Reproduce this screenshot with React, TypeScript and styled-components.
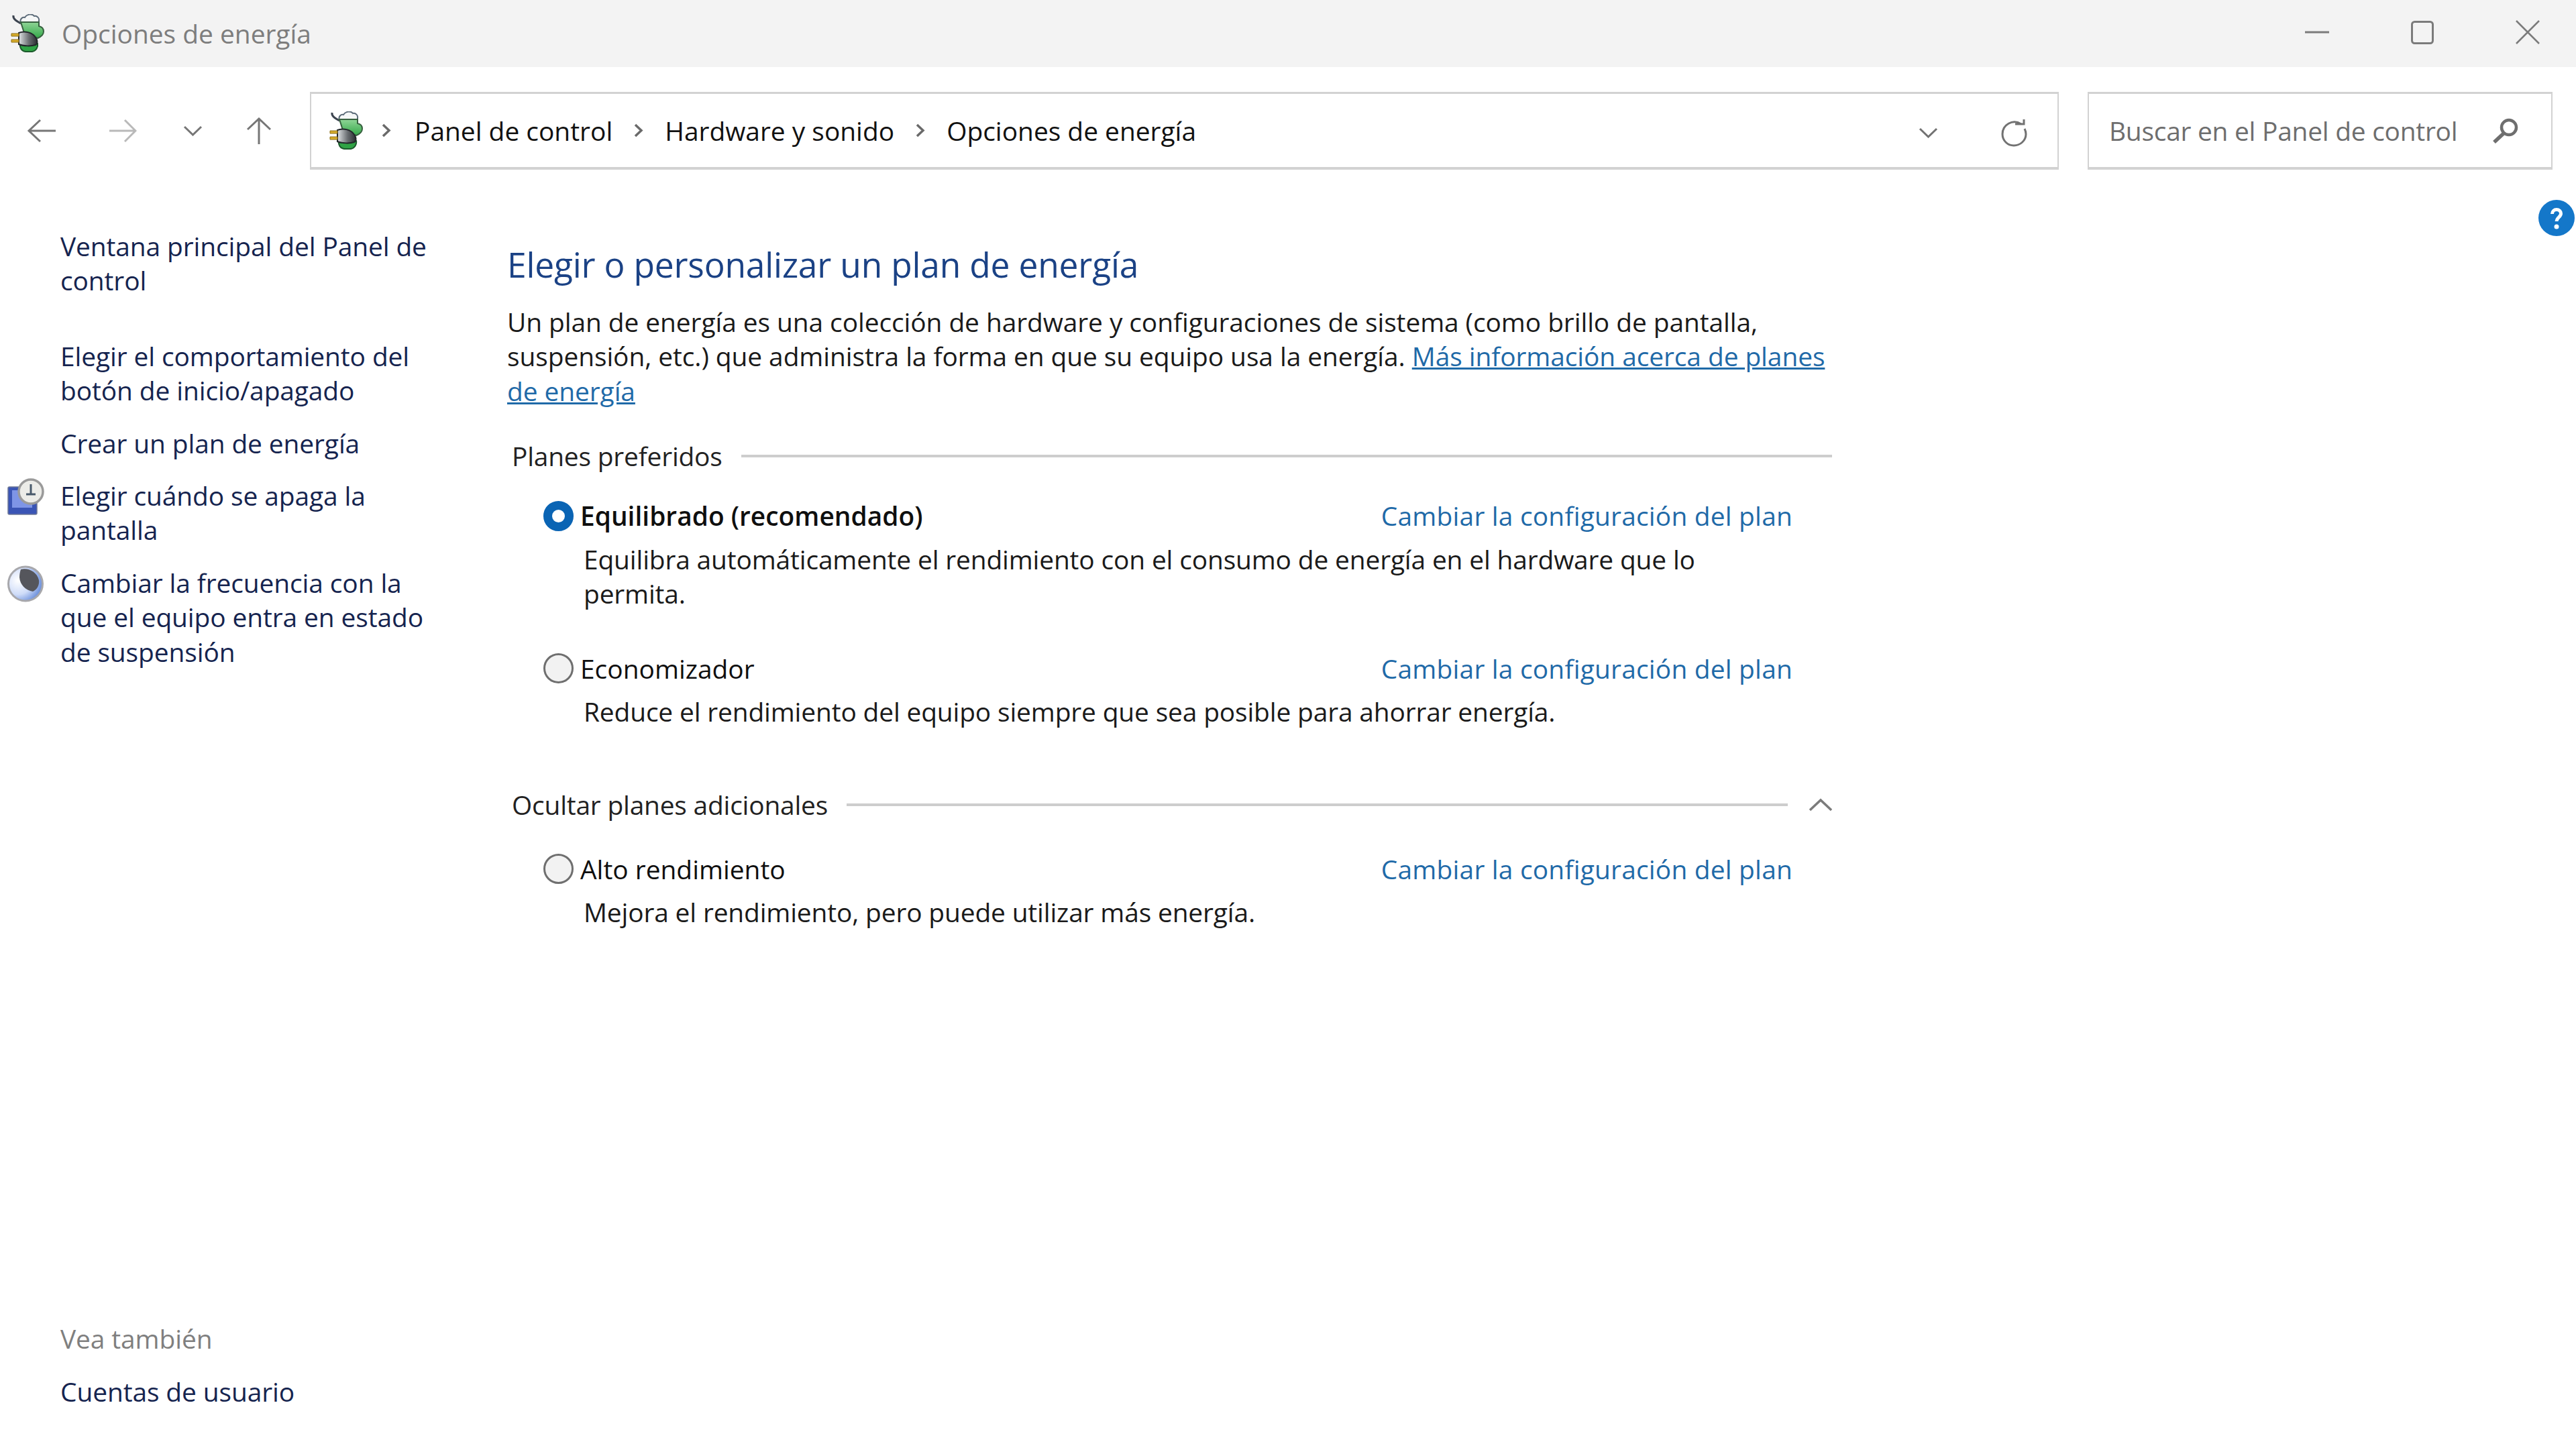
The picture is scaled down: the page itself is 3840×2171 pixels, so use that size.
import type { ReactNode } from 'react';
import { createGlobalStyle, styled } from 'styled-components';

const GlobalStyle = createGlobalStyle`
  html, body {
    margin: 0;
    padding: 0;
    background: #ffffff;
  }
  * {
    box-sizing: border-box;
  }
`;

const Page = styled.div`
  width: 3840px;
  height: 2171px;
  display: flex;
  flex-direction: column;
  overflow: hidden;
  background: #ffffff;
  font-family: "Open Sans", "Noto Sans", sans-serif;
  font-size: 38.9px;
  line-height: 51.4px;
  color: #1a1a1a;
`;

const TitleBar = styled.header`
  height: 100px;
  flex: none;
  display: flex;
  align-items: center;
  padding-left: 16px;
  background: #f3f3f3;
`;

const TitleText = styled.span`
  margin-left: 22px;
  color: #7d7d7d;
`;

const WindowButtons = styled.div`
  margin-left: auto;
  margin-right: 54px;
  margin-bottom: 4px;
  display: flex;
  align-items: center;
  gap: 122px;
  color: #7b7b7b;
`;

const NavBar = styled.nav`
  height: 153px;
  flex: none;
  display: flex;
  align-items: flex-end;
  padding-right: 35px;
`;

const NavButtons = styled.div`
  width: 462px;
  height: 116px;
  flex: none;
  display: flex;
  align-items: center;
  padding-left: 40px;
  color: #767676;
`;

const NavSlot = styled.span<{ $width: number }>`
  width: ${(p) => p.$width}px;
  flex: none;
  display: flex;
  align-items: center;
`;

const FieldBox = styled.div`
  height: 116px;
  display: flex;
  align-items: center;
  background: #ffffff;
  border: 2px solid #d2d2d2;
  border-top-width: 3px;
  border-bottom-width: 4px;
`;

const AddressBox = styled(FieldBox)`
  width: 2607px;
  flex: none;
  padding-left: 27px;
`;

const Crumb = styled.span`
  color: #111111;
`;

const CrumbArrow = styled.span`
  width: 78px;
  display: flex;
  justify-content: center;
  color: #6a6a6a;
`;

const FirstArrow = styled(CrumbArrow)`
  width: 73px;
  padding-right: 11px;
`;

const AddressTools = styled.div`
  margin-left: auto;
  margin-right: 44px;
  padding-top: 6px;
  display: flex;
  align-items: center;
  gap: 93px;
  color: #727272;
`;

const SearchBox = styled(FieldBox)`
  width: 693px;
  flex: none;
  margin-left: 43px;
  padding: 0 48px 0 30px;
  justify-content: space-between;
  letter-spacing: -0.25px;
  color: #6e6e6e;
`;

const Body = styled.div`
  flex: 1;
  min-height: 0;
  display: flex;
`;

const Sidebar = styled.aside`
  width: 756px;
  flex: none;
  display: flex;
  flex-direction: column;
  padding: 88px 0 71px;
  letter-spacing: -0.1px;
`;

const SideLink = styled.a<{ $gap?: number }>`
  display: flex;
  align-items: flex-start;
  min-height: 51px;
  margin-bottom: ${(p) => p.$gap ?? 27}px;
  color: #15244f;
`;

const SideIcon = styled.span`
  width: 90px;
  flex: none;
  padding-left: 11px;
  display: flex;
`;

const SideHeading = styled.div`
  margin-top: auto;
  margin-bottom: 27px;
  padding-left: 90px;
  color: #7f7f7f;
`;

const Main = styled.main`
  width: 1975px;
  flex: none;
  padding-top: 113px;
`;

const Heading = styled.h1`
  margin: 0;
  font-size: 51.5px;
  font-weight: 400;
  line-height: 56px;
  letter-spacing: -0.2px;
  color: #1b4285;
`;

const Intro = styled.p`
  margin: 32px 0 0;
  white-space: nowrap;
  letter-spacing: -0.08px;
`;

const InlineLink = styled.a`
  color: #1f6aa8;
  text-decoration: underline;
`;

const SectionHead = styled.div<{ $top: number }>`
  display: flex;
  align-items: center;
  margin-top: ${(p) => p.$top}px;
  padding-left: 7px;
  letter-spacing: -0.2px;
  color: #222222;
`;

const SectionRule = styled.span`
  flex: 1;
  height: 4px;
  margin-left: 28px;
  background: #cdcdcd;
`;

const Collapse = styled.span`
  width: 66px;
  flex: none;
  padding-left: 32px;
  display: flex;
  color: #7b7b7b;
`;

const PlanList = styled.div<{ $top: number }>`
  margin-top: ${(p) => p.$top}px;
  padding-left: 54px;
  display: flex;
  flex-direction: column;
  gap: 61px;
`;

const PlanHead = styled.div`
  display: flex;
  align-items: center;
  height: 51px;
`;

const PlanLabel = styled.span<{ $selected?: boolean }>`
  margin-left: 10px;
  font-weight: ${(p) => (p.$selected ? 600 : 400)};
  color: #0f0f0f;
`;

const Radio = styled.span<{ $selected?: boolean }>`
  width: 45px;
  height: 45px;
  flex: none;
  border-radius: 50%;
  background: ${(p) => (p.$selected ? '#ffffff' : '#f2f2f2')};
  border: ${(p) => (p.$selected ? '13px solid #0a64b4' : '3px solid #6f6f6f')};
`;

const PlanLink = styled.a`
  margin-left: auto;
  margin-right: 59px;
  letter-spacing: 0.2px;
  color: #1f6aa8;
`;

const PlanText = styled.div`
  margin-top: 13px;
  padding-left: 60px;
  letter-spacing: -0.15px;
`;

const HelpSlot = styled.div`
  flex: 1;
  display: flex;
  justify-content: flex-end;
  padding: 45px 2px 0 0;
`;

const PowerIcon = () => (
  <svg width="54" height="58" viewBox="0 0 54 58">
    <defs>
      <linearGradient id="powerCell" x1="0" y1="0" x2="0" y2="1">
        <stop offset="0%" stopColor="#8fd596" />
        <stop offset="100%" stopColor="#33a848" />
      </linearGradient>
      <linearGradient id="powerPlug" x1="0" y1="0" x2="1" y2="0">
        <stop offset="0%" stopColor="#dfe2e4" />
        <stop offset="55%" stopColor="#6a6e72" />
        <stop offset="100%" stopColor="#2a2d31" />
      </linearGradient>
    </defs>
    <path d="M4 2c-1 5 4 8 11 12" fill="none" stroke="#3c4450" strokeWidth="3" />
    <path d="M15 13c-2-5 2-9 6-8 3-5 11-6 14-2 4-1 8 3 7 7v4H15z" fill="#f5f7f7" stroke="#5b6a78" strokeWidth="2" />
    <path d="M15 12h27v6c5 1 7 4 7 8 0 5-4 8-9 10l-20-8z" fill="url(#powerCell)" stroke="#37603f" strokeWidth="2" />
    <path d="M14 44h26c1 5-2 11-8 12H22c-6-1-9-6-8-12z" fill="#2fa345" stroke="#1c5a2c" strokeWidth="2" />
    <path d="M12 28c8-3 20-2 26 8 2 4 2 8-1 10-6 2-18 2-25-1z" fill="url(#powerPlug)" stroke="#22262a" strokeWidth="2" />
    <path d="M1 29h11v4H1zM1 38h11v4H1z" fill="#d8ad2b" stroke="#8c6f14" strokeWidth="1" />
  </svg>
);

const ClockIcon = () => (
  <svg width="55" height="55" viewBox="0 0 55 55">
    <rect x="1" y="13" width="43" height="41" rx="2" fill="#3a55b5" stroke="#6d7796" strokeWidth="1.5" />
    <path d="M7 18h30v26H7z" fill="#7e95e6" />
    <circle cx="35" cy="20" r="18" fill="#ecece8" stroke="#9a9a9a" strokeWidth="3.5" />
    <path d="M35 9v15M28 24h14" fill="none" stroke="#48596a" strokeWidth="3" />
  </svg>
);

const MoonIcon = () => (
  <svg width="54" height="55" viewBox="0 0 54 55">
    <defs>
      <radialGradient id="moonGlow" cx="28%" cy="40%" r="75%">
        <stop offset="0%" stopColor="#ffffff" />
        <stop offset="55%" stopColor="#cfdcf8" />
        <stop offset="100%" stopColor="#5f86d8" />
      </radialGradient>
    </defs>
    <circle cx="27" cy="27.5" r="25.5" fill="url(#moonGlow)" stroke="#a8a8ac" strokeWidth="3" />
    <path d="M20 6c10-3 24 3 27 16 1 8-3 14-9 17-11-2-19-10-20-21 0-5 1-9 2-12z" fill="#55565c" />
  </svg>
);

const BackArrow = () => (
  <svg width="43" height="36" viewBox="0 0 43 36">
    <path d="M20 2L3 18l17 16M3 18h40" fill="none" stroke="currentColor" strokeWidth="3" />
  </svg>
);

const ForwardArrow = () => (
  <svg width="41" height="36" viewBox="0 0 41 36" color="#b9b9b9">
    <path d="M23 2l16 16-16 16M39 18H0" fill="none" stroke="currentColor" strokeWidth="3" />
  </svg>
);

const SmallChevron = () => (
  <svg width="29" height="16" viewBox="0 0 29 16">
    <path d="M2 2l12.5 12L27 2" fill="none" stroke="currentColor" strokeWidth="3" />
  </svg>
);

const UpArrow = () => (
  <svg width="38" height="40" viewBox="0 0 38 40">
    <path d="M2 18L19 2l17 16M19 2v38" fill="none" stroke="currentColor" strokeWidth="3" />
  </svg>
);

const CrumbChevron = () => (
  <svg width="14" height="21" viewBox="0 0 14 21">
    <path d="M2 2l9 8.5L2 19" fill="none" stroke="currentColor" strokeWidth="3.5" />
  </svg>
);

const RefreshIcon = () => (
  <svg width="41" height="42" viewBox="0 0 41 42">
    <path d="M31 8C18 0 3 9 3 23c0 10 8 17 17 17s18-7 18-17c0-3-1-6-2-8" fill="none" stroke="currentColor" strokeWidth="3" />
    <path d="M22 8h13V1" fill="none" stroke="currentColor" strokeWidth="3" />
  </svg>
);

const SearchIcon = () => (
  <svg width="40" height="38" viewBox="0 0 40 38">
    <circle cx="25" cy="14" r="11" fill="none" stroke="currentColor" strokeWidth="4.5" />
    <path d="M17 23L3 36" fill="none" stroke="currentColor" strokeWidth="5.5" />
  </svg>
);

const MinimizeIcon = () => (
  <svg width="36" height="4" viewBox="0 0 36 4">
    <path d="M0 2h36" stroke="currentColor" strokeWidth="3" />
  </svg>
);

const MaximizeIcon = () => (
  <svg width="34" height="35" viewBox="0 0 34 35">
    <rect x="1.5" y="1.5" width="31" height="32" rx="4" fill="none" stroke="currentColor" strokeWidth="3" />
  </svg>
);

const CloseIcon = () => (
  <svg width="36" height="36" viewBox="0 0 36 36">
    <path d="M1 1l34 34M35 1L1 35" stroke="currentColor" strokeWidth="2.5" />
  </svg>
);

const CollapseChevron = () => (
  <svg width="34" height="20" viewBox="0 0 34 20">
    <path d="M1 18L17 3l16 15" fill="none" stroke="currentColor" strokeWidth="3.5" />
  </svg>
);

const HelpIcon = () => (
  <svg width="54" height="54" viewBox="0 0 54 54">
    <circle cx="27" cy="27" r="27" fill="#1477c9" />
    <path d="M20.5 21c0-4 3-6.5 6.5-6.5s6.5 2.5 6.5 6c0 5-6.5 6-6.5 11.5" fill="none" stroke="#ffffff" strokeWidth="5" />
    <circle cx="27" cy="40" r="3.5" fill="#ffffff" />
  </svg>
);

const plans = [
  { name: 'Equilibrado (recomendado)', selected: true, text: <>Equilibra automáticamente el rendimiento con el consumo de energía en el hardware que lo<br />permita.</> },
  { name: 'Economizador', selected: false, text: 'Reduce el rendimiento del equipo siempre que sea posible para ahorrar energía.' },
];

function Plan({ name, selected, text }: { name: string; selected: boolean; text: ReactNode }) {
  return (
    <div>
      <PlanHead>
        <Radio $selected={selected} />
        <PlanLabel $selected={selected}>{name}</PlanLabel>
        <PlanLink>Cambiar la configuración del plan</PlanLink>
      </PlanHead>
      <PlanText>{text}</PlanText>
    </div>
  );
}

export default function App() {
  return (
    <Page>
      <GlobalStyle />
      <TitleBar>
        <PowerIcon />
        <TitleText>Opciones de energía</TitleText>
        <WindowButtons>
          <MinimizeIcon />
          <MaximizeIcon />
          <CloseIcon />
        </WindowButtons>
      </TitleBar>

      <NavBar>
        <NavButtons>
          <NavSlot $width={123}><BackArrow /></NavSlot>
          <NavSlot $width={110}><ForwardArrow /></NavSlot>
          <NavSlot $width={94}><SmallChevron /></NavSlot>
          <NavSlot $width={50}><UpArrow /></NavSlot>
        </NavButtons>
        <AddressBox>
          <PowerIcon />
          <FirstArrow><CrumbChevron /></FirstArrow>
          <Crumb>Panel de control</Crumb>
          <CrumbArrow><CrumbChevron /></CrumbArrow>
          <Crumb>Hardware y sonido</Crumb>
          <CrumbArrow><CrumbChevron /></CrumbArrow>
          <Crumb>Opciones de energía</Crumb>
          <AddressTools>
            <SmallChevron />
            <RefreshIcon />
          </AddressTools>
        </AddressBox>
        <SearchBox>
          <span>Buscar en el Panel de control</span>
          <SearchIcon />
        </SearchBox>
      </NavBar>

      <Body>
        <Sidebar>
          <SideLink $gap={61}><SideIcon /><span>Ventana principal del Panel de<br />control</span></SideLink>
          <SideLink><SideIcon /><span>Elegir el comportamiento del<br />botón de inicio/apagado</span></SideLink>
          <SideLink><SideIcon /><span>Crear un plan de energía</span></SideLink>
          <SideLink><SideIcon><ClockIcon /></SideIcon><span>Elegir cuándo se apaga la<br />pantalla</span></SideLink>
          <SideLink><SideIcon><MoonIcon /></SideIcon><span>Cambiar la frecuencia con la<br />que el equipo entra en estado<br />de suspensión</span></SideLink>
          <SideHeading>Vea también</SideHeading>
          <SideLink $gap={0}><SideIcon /><span>Cuentas de usuario</span></SideLink>
        </Sidebar>

        <Main>
          <Heading>Elegir o personalizar un plan de energía</Heading>
          <Intro>
            Un plan de energía es una colección de hardware y configuraciones de sistema (como brillo de pantalla,<br />
            suspensión, etc.) que administra la forma en que su equipo usa la energía. <InlineLink>Más información acerca de planes<br />de energía</InlineLink>
          </Intro>

          <SectionHead $top={46}>
            Planes preferidos
            <SectionRule />
          </SectionHead>
          <PlanList $top={38}>
            {plans.map((plan) => (
              <Plan key={plan.name} {...plan} />
            ))}
          </PlanList>

          <SectionHead $top={87}>
            Ocultar planes adicionales
            <SectionRule />
            <Collapse><CollapseChevron /></Collapse>
          </SectionHead>
          <PlanList $top={45}>
            <Plan name="Alto rendimiento" selected={false} text="Mejora el rendimiento, pero puede utilizar más energía." />
          </PlanList>
        </Main>

        <HelpSlot>
          <HelpIcon />
        </HelpSlot>
      </Body>
    </Page>
  );
}
